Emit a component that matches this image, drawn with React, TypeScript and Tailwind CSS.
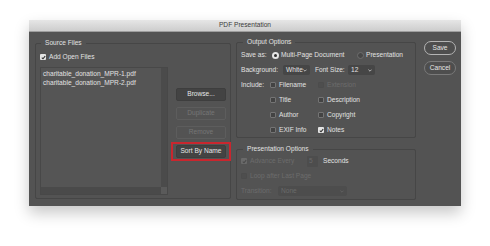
import type { ReactNode } from "react";

const FONT = { fontFamily: '"Liberation Sans", Arial, sans-serif' };

function Check({ checked = false, disabled = false }: { checked?: boolean; disabled?: boolean }) {
  if (checked) {
    return (
      <span
        className={`flex h-[6px] w-[6px] shrink-0 items-center justify-center rounded-[1px] ${
          disabled ? "bg-[#6a6a6a]" : "bg-[#e4e4e4]"
        }`}
      >
        <svg width="5" height="5" viewBox="0 0 5 5">
          <path
            d="M0.8 2.6 L2 3.8 L4.2 1.1"
            fill="none"
            stroke={disabled ? "#4a4a4a" : "#303030"}
            strokeWidth="1.1"
          />
        </svg>
      </span>
    );
  }
  return (
    <span
      className={`h-[6px] w-[6px] shrink-0 rounded-[1px] border ${
        disabled ? "border-[#4c4c4c] bg-[#4e4e4e]" : "border-[#747474] bg-[#434343]"
      }`}
    />
  );
}

function CheckItem({
  label,
  checked,
  disabled,
  className = "",
}: {
  label: string;
  checked?: boolean;
  disabled?: boolean;
  className?: string;
}) {
  return (
    <div className={`flex items-center gap-[3px] ${className}`}>
      <Check checked={checked} disabled={disabled} />
      <span className={disabled ? "text-[#6c6c6c]" : "text-[#e2e2e2]"}>{label}</span>
    </div>
  );
}

function Chevron({ color = "#cfcfcf" }: { color?: string }) {
  return (
    <svg width="4" height="3" viewBox="0 0 4 3" className="shrink-0">
      <path d="M0.4 0.6 L2 2.2 L3.6 0.6" fill="none" stroke={color} strokeWidth="0.8" />
    </svg>
  );
}

function Select({ value, width, disabled = false }: { value: string; width: string; disabled?: boolean }) {
  return (
    <div
      className={`flex h-[10px] items-center justify-between rounded-[2px] pl-[3px] pr-[3px] ${width} ${
        disabled ? "bg-[#4d4d4d] text-[#6a6a6a]" : "bg-[#464646] text-[#e2e2e2]"
      }`}
    >
      <span>{value}</span>
      <Chevron color={disabled ? "#666666" : "#cfcfcf"} />
    </div>
  );
}

function Button({ children, disabled = false }: { children: ReactNode; disabled?: boolean }) {
  return (
    <div
      className={`flex h-[13px] w-[50px] items-center justify-center rounded-[2px] border ${
        disabled
          ? "border-[#5d5d5d] bg-[#535353] text-[#767676]"
          : "border-[#3e3e3e] bg-[#434343] text-[#e6e6e6]"
      }`}
    >
      {children}
    </div>
  );
}

function Group({
  title,
  className,
  legendClass,
  children,
}: {
  title: string;
  className: string;
  legendClass: string;
  children: ReactNode;
}) {
  return (
    <fieldset className={`rounded-[2px] border border-[#464646] ${className}`}>
      <legend className={`px-[4px] leading-[8px] text-[#e2e2e2] ${legendClass}`}>{title}</legend>
      {children}
    </fieldset>
  );
}

export default function App() {
  return (
    <div className="min-h-[246px] bg-white pl-[29px] pt-[20px] text-[6.6px] leading-none" style={FONT}>
      <div className="w-[432px] shadow-[0_7px_14px_rgba(0,0,0,0.22)]">
        <div className="flex h-[12px] items-center justify-center border-b border-[#9e9e9e] bg-gradient-to-b from-[#e6e6e6] to-[#cdcdcd] text-[#3a3a3a]">
          PDF Presentation
        </div>
        <div className="flex h-[174px] items-start bg-[#535353] pl-[6px] pr-[5px]">
          <Group title="Source Files" className="mt-[7px] h-[160px] w-[196px]" legendClass="ml-[5px]">
            <div className="px-[4px]">
              <CheckItem label="Add Open Files" checked className="mt-[6px] h-[8px]" />
              <div className="mt-[6px] flex items-start gap-[8px]">
                <div className="flex h-[128px] w-[128px] flex-col border border-[#484848] bg-[#555555]">
                  <div className="flex min-h-0 flex-1">
                    <div className="flex-1 pl-[2px] pt-[1px] text-[#e2e2e2]">
                      <div className="h-[9px] leading-[9px]">charitable_donation_MPR-1.pdf</div>
                      <div className="h-[9px] leading-[9px]">charitable_donation_MPR-2.pdf</div>
                    </div>
                    <div className="w-[6px] bg-[#4b4b4b]" />
                  </div>
                  <div className="flex h-[7px]">
                    <div className="flex-1 bg-[#4a4a4a]" />
                    <div className="w-[6px] bg-[#5a5a5a]" />
                  </div>
                </div>
                <div className="mt-[21px] flex flex-col gap-[6px]">
                  <Button>Browse...</Button>
                  <Button disabled>Duplicate</Button>
                  <Button disabled>Remove</Button>
                  <div className="-mx-[5px] -my-[3px] border-2 border-[#c9262e] px-[3px] py-[1px]">
                    <Button>Sort By Name</Button>
                  </div>
                </div>
              </div>
            </div>
          </Group>

          <div className="ml-[5px] flex w-[180px] flex-col">
            <Group title="Output Options" className="mt-[6px] h-[100px]" legendClass="ml-[6px]">
              <div className="mt-[4px] flex flex-col gap-[5px] pl-[4px] text-[#e2e2e2]">
                <div className="flex h-[10px] items-center">
                  <span className="w-[31px]">Save as:</span>
                  <div className="flex w-[85px] items-center gap-[2px]">
                    <span className="flex h-[7px] w-[7px] items-center justify-center rounded-full bg-[#e6e6e6]">
                      <span className="h-[3px] w-[3px] rounded-full bg-[#2e2e2e]" />
                    </span>
                    <span>Multi-Page Document</span>
                  </div>
                  <div className="flex items-center gap-[2px]">
                    <span className="h-[7px] w-[7px] rounded-full border border-[#6e6e6e] bg-[#474747]" />
                    <span>Presentation</span>
                  </div>
                </div>
                <div className="flex h-[10px] items-center">
                  <span className="w-[42px]">Background:</span>
                  <Select value="White" width="w-[27px]" />
                  <span className="ml-[5px] w-[33px]">Font Size:</span>
                  <Select value="12" width="w-[27px]" />
                </div>
                <div className="flex h-[10px] items-center">
                  <span className="w-[29px]">Include:</span>
                  <CheckItem label="Filename" className="w-[48px]" />
                  <CheckItem label="Extension" disabled />
                </div>
                <div className="flex h-[10px] items-center pl-[29px]">
                  <CheckItem label="Title" className="w-[48px]" />
                  <CheckItem label="Description" />
                </div>
                <div className="flex h-[10px] items-center pl-[29px]">
                  <CheckItem label="Author" className="w-[48px]" />
                  <CheckItem label="Copyright" />
                </div>
                <div className="flex h-[10px] items-center pl-[29px]">
                  <CheckItem label="EXIF Info" className="w-[48px]" />
                  <CheckItem label="Notes" checked />
                </div>
              </div>
            </Group>

            <Group title="Presentation Options" className="mt-[7px] h-[55px]" legendClass="ml-[6px]">
              <div className="mt-[3px] flex flex-col gap-[5px] pl-[4px]">
                <div className="flex h-[10px] items-center">
                  <CheckItem label="Advance Every" checked disabled className="w-[66px]" />
                  <div className="flex h-[11px] w-[11px] items-center rounded-[1px] bg-[#4d4d4d] pl-[2px] text-[#6a6a6a]">
                    5
                  </div>
                  <span className="ml-[5px] text-[#e2e2e2]">Seconds</span>
                </div>
                <div className="flex h-[10px] items-center">
                  <CheckItem label="Loop after Last Page" disabled />
                </div>
                <div className="flex h-[10px] items-center">
                  <span className="w-[37px] text-[#6c6c6c]">Transition:</span>
                  <Select value="None" width="w-[69px]" disabled />
                </div>
              </div>
            </Group>
          </div>

          <div className="ml-[8px] mt-[9px] flex w-[32px] flex-col gap-[6px] text-[#e6e6e6]">
            <div className="flex h-[14px] items-center justify-center rounded-full border border-[#b4b4b4] bg-[#4e4e4e]">
              Save
            </div>
            <div className="flex h-[14px] items-center justify-center rounded-full border border-[#7a7a7a] bg-[#4e4e4e]">
              Cancel
            </div>
          </div>
        </div>
      </div>
    </div>
  );
}
